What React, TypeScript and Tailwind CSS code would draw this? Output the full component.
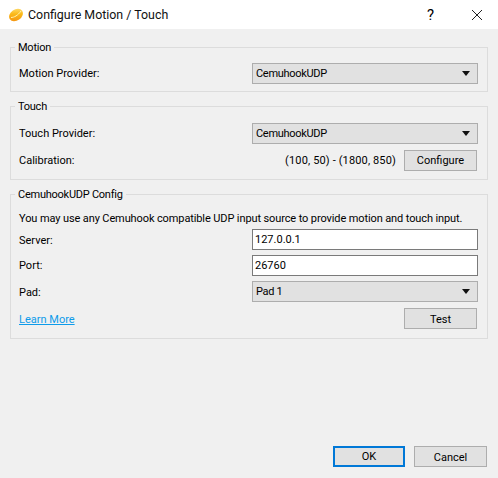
import { ReactNode } from "react";

const selectClass =
    "flex items-center justify-between w-[226px] h-[21px] pl-[3px] pr-[5px] bg-[#e1e1e1] border border-[#adadad]";
const buttonClass =
    "flex items-center justify-center h-[21px] bg-[#e1e1e1] text-[#000000]";
const inputClass =
    "w-[226px] h-[21px] px-[2px] bg-white border border-[#7a7a7a] outline-none text-black";

function Combo({ value }: { value: string }) {
    return (
        <div className={selectClass}>
            <span className="tracking-[-0.3px]">{value}</span>
            <svg width="9" height="5" viewBox="0 0 9 5" className="mr-[1px]">
                <path d="M0 0h8L4 5z" fill="#111" />
            </svg>
        </div>
    );
}

function Group({ title, className, children }: { title: string; className: string; children: ReactNode }) {
    return (
        <fieldset className={`border border-[#dcdcdc] px-2 ${className}`}>
            <legend className="-ml-[4px] px-[3px] h-[16px] leading-[18px] tracking-[-0.25px]">{title}</legend>
            {children}
        </fieldset>
    );
}

function Row({ label, children, className, labelClass = "" }: { label: string; children: ReactNode; className: string; labelClass?: string }) {
    return (
        <div className={`flex items-center justify-between ${className}`}>
            <span className={labelClass}>{label}</span>
            {children}
        </div>
    );
}

export default function App() {
    return (
        <div className="w-[498px] h-[478px] flex flex-col bg-[#f0f0f0] text-[11px] leading-[16px] text-black font-['Roboto',sans-serif]">
            {/* Title bar */}
            <div className="flex items-center h-[29px] bg-white shrink-0">
                <svg width="16" height="16" viewBox="0 0 16 16" className="ml-[8px]">
                    <defs>
                        <linearGradient id="lemon" x1="0" y1="1" x2="1" y2="0">
                            <stop offset="0" stopColor="#f28a12" />
                            <stop offset="0.55" stopColor="#fbb917" />
                            <stop offset="1" stopColor="#fde68a" />
                        </linearGradient>
                    </defs>
                    <ellipse cx="8" cy="8" rx="7.5" ry="5.5" transform="rotate(-35 8 8)" fill="url(#lemon)" />
                    <path d="M3 10.5C6 10.5 10 8.5 13 4" stroke="#fff2b0" strokeWidth="1" fill="none" />
                </svg>
                <span className="ml-[4px] text-[12.4px] text-[#111]">Configure Motion / Touch</span>
                <span className="ml-auto mr-[37px] text-[15px]">?</span>
                <svg width="12" height="12" viewBox="0 0 12 12" className="mr-[15px]">
                    <path d="M1 1l10 10M11 1L1 11" stroke="#222" strokeWidth="1" />
                </svg>
            </div>

            <div className="flex-1 flex flex-col px-[10px] pt-[10px] pb-[11px]">
                <Group title="Motion" className="h-[53px] pt-[8px]">
                    <Row label="Motion Provider:" className="pt-[0px]">
                        <div className="mr-[1px]">
                            <Combo value="CemuhookUDP" />
                        </div>
                    </Row>
                </Group>

                <Group title="Touch" className="h-[82px] mt-[6px]">
                    <Row label="Touch Provider:" className="mt-[9px]">
                        <div className="mr-[1px]">
                            <Combo value="CemuhookUDP" />
                        </div>
                    </Row>
                    <div className="flex items-center mt-[6px]">
                        <span>Calibration:</span>
                        <span className="ml-auto mr-[8px] tracking-[0.14px]">(100, 50) - (1800, 850)</span>
                        <button className={`${buttonClass} w-[73px] border border-[#adadad] mr-[2px]`}>Configure</button>
                    </div>
                </Group>

                <Group title="CemuhookUDP Config" className="h-[153px] mt-[6px]">
                    <p className="mt-[9px] tracking-[-0.11px]">You may use any Cemuhook compatible UDP input source to provide motion and touch input.</p>
                    <Row label="Server:" className="mt-[2px]" labelClass="pt-[2px]">
                        <input readOnly value="127.0.0.1" className={`${inputClass} mr-[1px]`} />
                    </Row>
                    <Row label="Port:" className="mt-[5px]">
                        <input readOnly value="26760" className={`${inputClass} mr-[1px]`} />
                    </Row>
                    <Row label="Pad:" className="mt-[5px]" labelClass="pt-[2px]">
                        <div className="mr-[1px]">
                            <Combo value="Pad 1" />
                        </div>
                    </Row>
                    <div className="flex items-center justify-between mt-[6px]">
                        <span className="text-[#0d9bea] underline pt-[2px]">Learn More</span>
                        <button className={`${buttonClass} w-[73px] border border-[#adadad] mr-[2px] pt-[2px]`}>Test</button>
                    </div>
                </Group>

                <div className="mt-auto flex justify-end gap-[9px] pr-[1px]">
                    <button className={`${buttonClass} w-[72px] border-2 border-[#0078d7] pt-[1px]`}>OK</button>
                    <button className={`${buttonClass} w-[73px] border border-[#adadad] pt-[2px]`}>Cancel</button>
                </div>
            </div>
        </div>
    );
}
